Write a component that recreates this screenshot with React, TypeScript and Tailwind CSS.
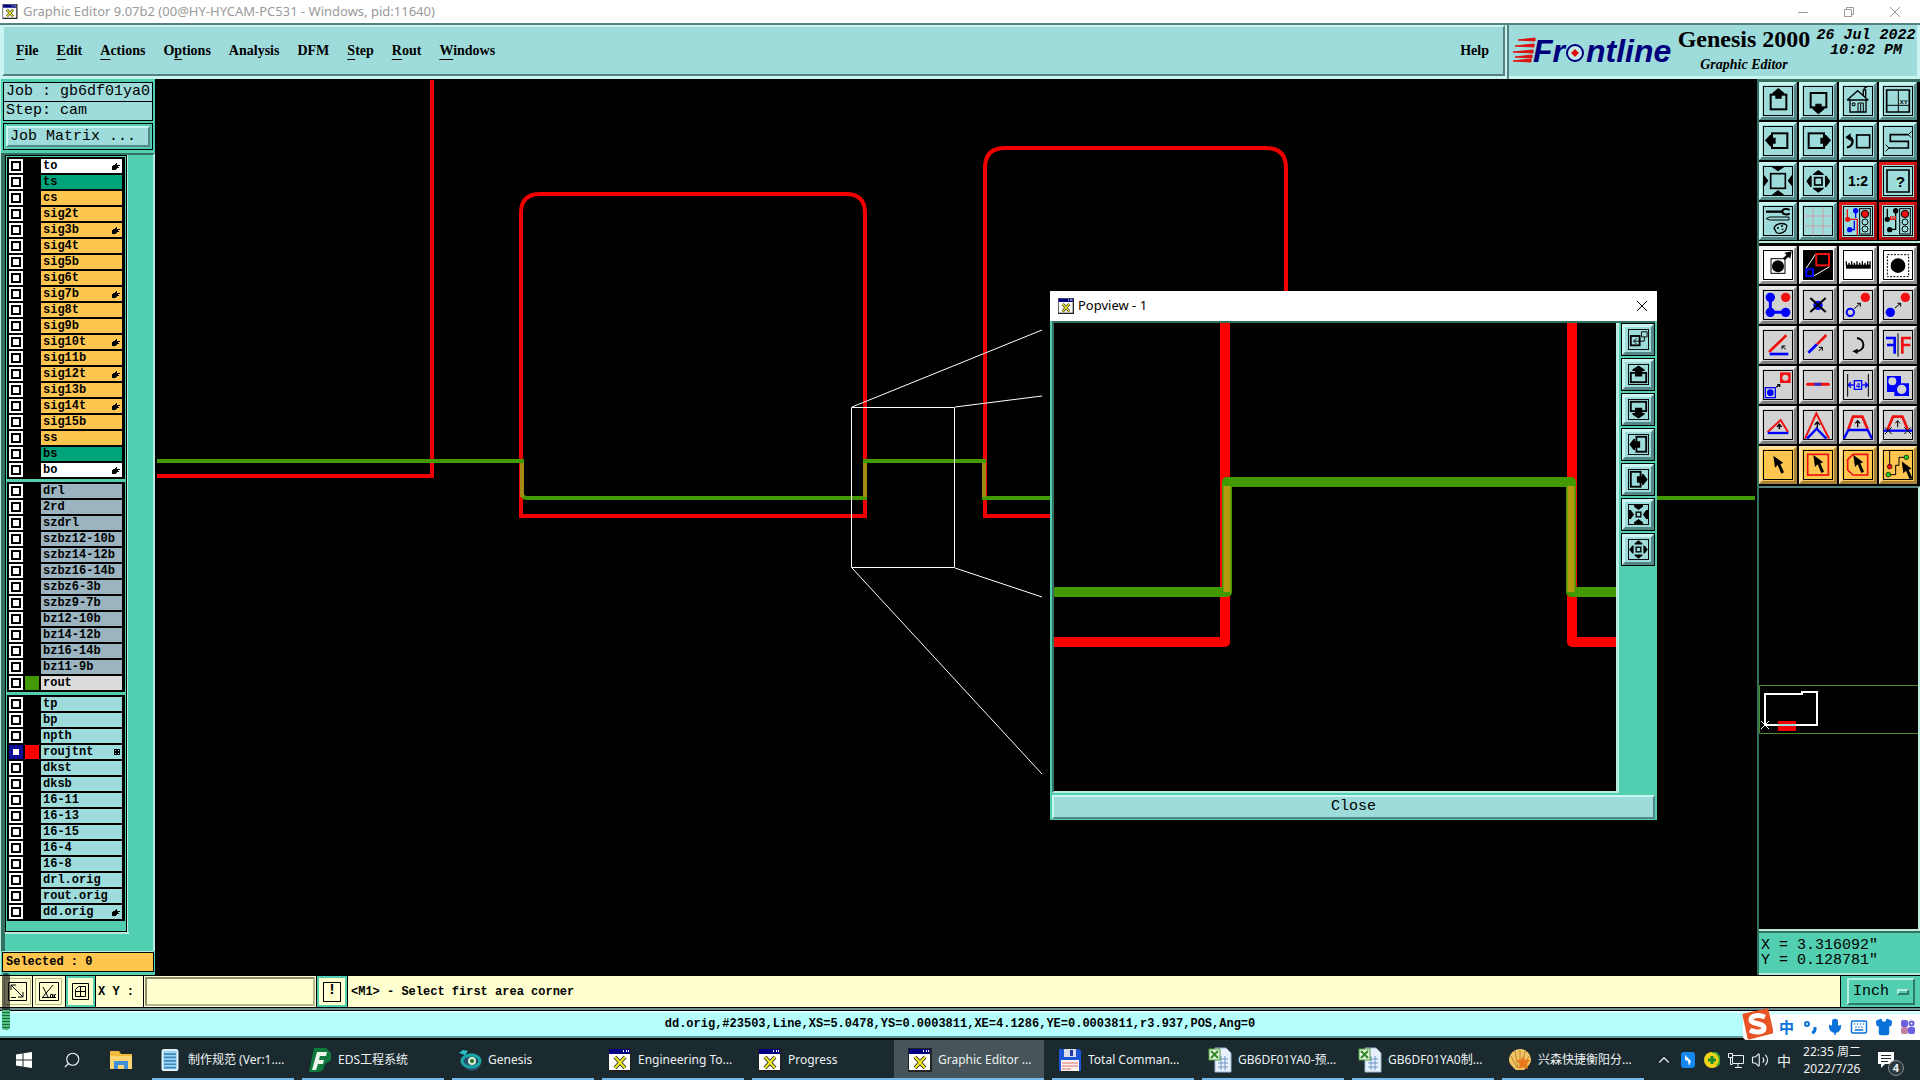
import React from 'react';
import { Search, Mic, Keyboard, Shirt, ChevronUp, Volume2 } from 'lucide-react';

type Layer = { name: string; bg: string; mark?: 'hand' | 'grid'; swatch?: string; active?: boolean };

const BLUE = '#0000ff';
const RED = '#f01010';

const orange = 'bg-[#ffc64f]';
const grey = 'bg-[#9bb4bf]';
const cyan = 'bg-[#9edbdb]';

const boardLayers: Layer[] = [
  { name: 'to', bg: 'bg-white', mark: 'hand' },
  { name: 'ts', bg: 'bg-[#00a37a]' },
  { name: 'cs', bg: orange },
  { name: 'sig2t', bg: orange },
  { name: 'sig3b', bg: orange, mark: 'hand' },
  { name: 'sig4t', bg: orange },
  { name: 'sig5b', bg: orange },
  { name: 'sig6t', bg: orange },
  { name: 'sig7b', bg: orange, mark: 'hand' },
  { name: 'sig8t', bg: orange },
  { name: 'sig9b', bg: orange },
  { name: 'sig10t', bg: orange, mark: 'hand' },
  { name: 'sig11b', bg: orange },
  { name: 'sig12t', bg: orange, mark: 'hand' },
  { name: 'sig13b', bg: orange },
  { name: 'sig14t', bg: orange, mark: 'hand' },
  { name: 'sig15b', bg: orange },
  { name: 'ss', bg: orange },
  { name: 'bs', bg: 'bg-[#00a37a]' },
  { name: 'bo', bg: 'bg-white', mark: 'hand' },
];

const drillLayers: Layer[] = [
  ...['drl', '2rd', 'szdrl', 'szbz12-10b', 'szbz14-12b', 'szbz16-14b', 'szbz6-3b', 'szbz9-7b', 'bz12-10b', 'bz14-12b', 'bz16-14b', 'bz11-9b'].map(
    (name) => ({ name, bg: grey }),
  ),
  { name: 'rout', bg: 'bg-[#dcdcdc]', swatch: 'bg-[#439a00]' },
];

const miscLayers: Layer[] = [
  { name: 'tp', bg: cyan },
  { name: 'bp', bg: cyan },
  { name: 'npth', bg: cyan },
  { name: 'roujtnt', bg: cyan, mark: 'grid', swatch: 'bg-[#ff0000]', active: true },
  ...['dkst', 'dksb', '16-11', '16-13', '16-15', '16-4', '16-8', 'drl.orig', 'rout.orig'].map((name) => ({ name, bg: cyan })),
  { name: 'dd.orig', bg: cyan, mark: 'hand' },
];

const menus: [string, string, string][] = [
  ['', 'F', 'ile'],
  ['', 'E', 'dit'],
  ['', 'A', 'ctions'],
  ['O', 'p', 'tions'],
  ['Analysis', '', ''],
  ['DFM', '', ''],
  ['', 'S', 'tep'],
  ['', 'R', 'out'],
  ['', 'W', 'indows'],
];

const mono = "font-['Liberation_Mono',monospace]";
const serif = "font-['Liberation_Serif',serif]";
const ui = "font-['Noto_Sans','Noto_Sans_CJK_SC',sans-serif]";

const bevel = {
  cyan: 'bg-[#9edbdb] border-t-[#c8f4f2] border-l-[#c8f4f2] border-r-[#548888] border-b-[#548888]',
  white: 'bg-white border-t-[#f4f4f4] border-l-[#f4f4f4] border-r-[#8e8e8e] border-b-[#8e8e8e]',
  grey: 'bg-[#d2d2d2] border-t-[#e9e9e9] border-l-[#e9e9e9] border-r-[#7d7d7d] border-b-[#7d7d7d]',
  orange: 'bg-[#ffc64f] border-t-[#ffe09c] border-l-[#ffe09c] border-r-[#a8843a] border-b-[#a8843a]',
  red: 'bg-[#9edbdb] border-t-[#e01818] border-l-[#e01818] border-r-[#a01010] border-b-[#a01010]',
};

type Tool = { label: string; tone: keyof typeof bevel; art: React.ReactNode };

const trafficLight = (
  <g strokeWidth="3" stroke="#000" fill="none">
    <rect x="50" y="8" width="32" height="76" />
    <circle cx="66" cy="24" r="11" fill={RED} />
    <circle cx="66" cy="48" r="9" />
    <circle cx="66" cy="69" r="9" />
  </g>
);

const cursor = <path d="M0 0l5 36 8-8 11 26 8-4-11-25 9-3z" fill="#000" />;

// Artwork uses a 90 unit box, three units to one screen pixel
const viewTools: Tool[] = [
  {
    label: 'Pan up',
    tone: 'cyan',
    art: (
      <>
        <rect x="23" y="26" width="47" height="44" fill="none" stroke="#000" strokeWidth="6" />
        <path d="M46 6l18 15v5H56v12H37V26h-9v-5z" />
      </>
    ),
  },
  {
    label: 'Pan down',
    tone: 'cyan',
    art: (
      <>
        <rect x="23" y="21" width="47" height="43" fill="none" stroke="#000" strokeWidth="6" />
        <path d="M46 85L29 70v-6h8V53h19v11h8v6z" />
      </>
    ),
  },
  {
    label: 'Home',
    tone: 'cyan',
    art: (
      <g fill="none" stroke="#000" strokeWidth="4">
        <path d="M12 43L44 14l32 29M21 41v37h48V41M14 42h62M61 27V12h7v20M62 8l10-6" />
        <path d="M28 51h8v8h-8zM45 78V51h16v27M53 53v24" strokeWidth="3" />
      </g>
    ),
  },
  {
    label: 'Coordinates view',
    tone: 'cyan',
    art: (
      <>
        <path d="M11 12h68v66H11z" fill="none" stroke="#000" strokeWidth="5" />
        <path d="M46 12v66M11 58h68" stroke="#000" strokeWidth="3" />
        <text x="50" y="55" fontSize="18" fontWeight="bold" fontFamily="Liberation Sans">XY</text>
      </>
    ),
  },
  {
    label: 'Pan left',
    tone: 'cyan',
    art: (
      <>
        <rect x="27" y="22" width="46" height="44" fill="none" stroke="#000" strokeWidth="6" />
        <path d="M6 43l15-16h5v8h12v18H26v8h-5z" />
      </>
    ),
  },
  {
    label: 'Pan right',
    tone: 'cyan',
    art: (
      <>
        <rect x="17" y="22" width="46" height="44" fill="none" stroke="#000" strokeWidth="6" />
        <path d="M84 43L69 27h-5v8H52v18h12v8h5z" />
      </>
    ),
  },
  {
    label: 'Previous view',
    tone: 'cyan',
    art: (
      <g fill="none" stroke="#000">
        <rect x="41" y="27" width="39" height="38" strokeWidth="5" />
        <path d="M12 34c22-4 22 28 0 30" strokeWidth="7" />
        <path d="M7 34l16-12v24z" fill="#000" stroke="none" />
      </g>
    ),
  },
  {
    label: 'Serpentine',
    tone: 'cyan',
    art: (
      <g fill="none" stroke="#000">
        <path d="M76 26H22v20h54v20H18" strokeWidth="5" />
        <path d="M76 26l10-10M76 26l8 8M18 66L8 56M18 66L8 76" strokeWidth="3" />
      </g>
    ),
  },
  {
    label: 'Zoom in',
    tone: 'cyan',
    art: (
      <>
        <rect x="23" y="23" width="44" height="44" fill="none" stroke="#000" strokeWidth="5" />
        <path d="M27 0h36v4L45 16 27 4zM27 90h36v-4L45 72 27 86zM0 28h4l12 16L4 60H0zM90 28h-4L74 44l12 16h4z" />
      </>
    ),
  },
  {
    label: 'Zoom out',
    tone: 'cyan',
    art: (
      <>
        <rect x="35" y="35" width="22" height="22" fill="none" stroke="#000" strokeWidth="5" />
        <path d="M46 12l16 12v3H30v-3zM46 80L62 68v-3H30v3zM10 46l12-17h4v34h-4zM82 46L70 29h-4v34h4z" />
      </>
    ),
  },
  {
    label: 'Scale one to two',
    tone: 'cyan',
    art: <text x="45" y="60" textAnchor="middle" fontSize="42" fontWeight="bold" fontFamily="Liberation Sans">1:2</text>,
  },
  {
    label: 'Query',
    tone: 'red',
    art: (
      <>
        <path d="M12 12h66v66H12z" fill="none" stroke="#000" strokeWidth="5" />
        <text x="52" y="62" textAnchor="middle" fontSize="46" fontWeight="bold" fontFamily="Liberation Sans">?</text>
      </>
    ),
  },
  {
    label: 'Setup',
    tone: 'cyan',
    art: (
      <g fill="none" stroke="#000">
        <path d="M9 17h50" strokeWidth="7" />
        <path d="M80 12c-8-6-22-3-22 5s14 11 22 5" strokeWidth="6" />
        <path d="M10 38l10-5h58v9H20z" strokeWidth="3" />
        <path d="M33 68c2-14 20-18 32-14s4 10 4 16-16 15-26 11c-8-3-2-8-10-13zM42 66h6M54 60h6M56 70h5" strokeWidth="4" />
      </g>
    ),
  },
  {
    label: 'Grid',
    tone: 'cyan',
    art: <path d="M30 2v86M60 2v86M2 30h86M2 60h86" stroke="#c9a0a8" strokeWidth="3" />,
  },
  {
    label: 'Net check on',
    tone: 'red',
    art: (
      <>
        <path d="M13 10v30h30v48" fill="none" stroke={RED} strokeWidth="4" />
        <circle cx="14" cy="40" r="8" fill={RED} />
        <circle cx="38" cy="14" r="8" fill={BLUE} />
        <circle cx="20" cy="71" r="8" fill={BLUE} />
        <path d="M38 14v22M20 71h14V44" fill="none" stroke={BLUE} strokeWidth="4" />
        {trafficLight}
      </>
    ),
  },
  {
    label: 'Net spacing',
    tone: 'red',
    art: (
      <>
        <path d="M13 8v32M38 14v56H20" fill="none" stroke="#000" strokeWidth="4" />
        <circle cx="13" cy="40" r="8" />
        <circle cx="38" cy="14" r="8" />
        <circle cx="20" cy="71" r="8" />
        <path d="M20 40h18M23 30v10M30 30v10M37 30v10" stroke={RED} strokeWidth="4" />
        {trafficLight}
      </>
    ),
  },
];

const editTools: Tool[] = [
  {
    label: 'Select feature',
    tone: 'white',
    art: (
      <>
        <rect x="24" y="26" width="42" height="44" fill="none" stroke="#000" strokeWidth="3" />
        <circle cx="45" cy="49" r="18" />
        <path d="M62 28l16-14" stroke="#000" strokeWidth="8" />
        <path d="M64 8l22-4-4 22z" />
      </>
    ),
  },
  {
    label: 'Popview',
    tone: 'white',
    art: (
      <>
        <rect x="2" y="2" width="86" height="86" />
        <path d="M10 54L38 12M32 78l48-28" stroke="#fff" strokeWidth="3" />
        <rect x="40" y="12" width="38" height="34" fill="none" stroke={RED} strokeWidth="6" />
        <rect x="10" y="58" width="20" height="20" fill="none" stroke={BLUE} strokeWidth="6" />
      </>
    ),
  },
  {
    label: 'Measure',
    tone: 'white',
    art: (
      <>
        <rect x="9" y="44" width="74" height="12" />
        <path d="M10 46V34M18 46V38M26 46V34M34 46V38M42 46V34M50 46V38M58 46V34M66 46V38M74 46V34M81 46V34" stroke="#000" strokeWidth="4" />
      </>
    ),
  },
  {
    label: 'Highlight',
    tone: 'white',
    art: (
      <>
        <rect x="13" y="14" width="64" height="66" fill="none" stroke="#000" strokeWidth="3" strokeDasharray="6 4" />
        <circle cx="45" cy="47" r="22" />
      </>
    ),
  },
  {
    label: 'Copy polyline',
    tone: 'grey',
    art: (
      <>
        <path d="M22 22v45h46" fill="none" stroke={BLUE} strokeWidth="9" />
        <circle cx="22" cy="22" r="14" fill={BLUE} />
        <circle cx="22" cy="67" r="14" fill={BLUE} />
        <circle cx="68" cy="67" r="14" fill={BLUE} />
        <circle cx="68" cy="22" r="14" fill={RED} />
      </>
    ),
  },
  {
    label: 'Delete',
    tone: 'grey',
    art: (
      <>
        <circle cx="45" cy="46" r="14" fill={BLUE} />
        <path d="M22 24l46 42M68 24L22 66" stroke="#000" strokeWidth="6" />
      </>
    ),
  },
  {
    label: 'Move',
    tone: 'grey',
    art: (
      <>
        <circle cx="22" cy="67" r="11" fill="none" stroke={BLUE} strokeWidth="6" />
        <circle cx="67" cy="22" r="14" fill={RED} />
        <path d="M34 56l18-16M42 40h10v10" fill="none" stroke="#000" strokeWidth="3" />
      </>
    ),
  },
  {
    label: 'Copy',
    tone: 'grey',
    art: (
      <>
        <circle cx="22" cy="67" r="14" fill={BLUE} />
        <circle cx="67" cy="22" r="14" fill={RED} />
        <path d="M36 54l17-14M43 40h10v10" fill="none" stroke="#000" strokeWidth="3" />
      </>
    ),
  },
  {
    label: 'Angle line',
    tone: 'grey',
    art: (
      <>
        <path d="M18 66L70 16" stroke={RED} strokeWidth="8" />
        <path d="M20 72h56" stroke={BLUE} strokeWidth="8" />
        <path d="M68 58L57 48M57 58V48h10" fill="none" stroke="#000" strokeWidth="3" />
      </>
    ),
  },
  {
    label: 'Stretch line',
    tone: 'grey',
    art: (
      <>
        <path d="M16 68l26-25" stroke={BLUE} strokeWidth="8" />
        <path d="M42 43l28-28" stroke={RED} strokeWidth="8" />
        <path d="M47 63l11-11M48 52h10v10" fill="none" stroke="#000" strokeWidth="3" />
      </>
    ),
  },
  {
    label: 'Rotate',
    tone: 'grey',
    art: (
      <>
        <path d="M42 24c26 4 26 38-2 40" fill="none" stroke="#000" strokeWidth="6" />
        <path d="M28 64l16-8v16z" />
      </>
    ),
  },
  {
    label: 'Mirror',
    tone: 'grey',
    art: (
      <>
        <path d="M45 10v70" stroke="#000" strokeWidth="3" />
        <path d="M9 24h26v47M35 45H12" fill="none" stroke={BLUE} strokeWidth="8" />
        <path d="M84 24H58v47M58 45h24" fill="none" stroke={RED} strokeWidth="8" />
      </>
    ),
  },
  {
    label: 'Substitute',
    tone: 'grey',
    art: (
      <>
        <rect x="7" y="53" width="30" height="30" fill="none" stroke={BLUE} strokeWidth="4" />
        <circle cx="22" cy="68" r="10" fill={BLUE} />
        <rect x="51" y="7" width="32" height="32" fill={RED} />
        <circle cx="67" cy="23" r="9" fill="#d2d2d2" />
        <path d="M40 52l9-8M43 44h7v7" fill="none" stroke="#000" strokeWidth="4" />
      </>
    ),
  },
  {
    label: 'Break line',
    tone: 'grey',
    art: (
      <>
        <path d="M14 43h62" stroke={RED} strokeWidth="9" strokeLinecap="round" />
        <path d="M34 43h20" stroke="#3030d0" strokeWidth="9" />
      </>
    ),
  },
  {
    label: 'Spacing',
    tone: 'grey',
    art: (
      <>
        <path d="M14 12v68M76 12v68" stroke="#000" strokeWidth="3" />
        <path d="M32 45H16M24 37l-8 8 8 8M58 45h16M66 37l8 8-8 8" fill="none" stroke={BLUE} strokeWidth="4" />
        <rect x="34" y="32" width="22" height="26" fill="none" stroke={BLUE} strokeWidth="4" />
        <text x="45" y="54" textAnchor="middle" fontSize="24" fontWeight="bold" fill={BLUE} fontFamily="Liberation Sans">4</text>
      </>
    ),
  },
  {
    label: 'Union',
    tone: 'grey',
    art: (
      <>
        <path d="M12 18h42v22h24v38H34V66H12z" fill={BLUE} />
        <circle cx="28" cy="34" r="12" fill="#d2d2d2" />
        <circle cx="56" cy="58" r="14" fill="#d2d2d2" />
      </>
    ),
  },
  {
    label: 'Corner',
    tone: 'grey',
    art: (
      <>
        <path d="M14 66l39-36 22 36" fill="none" stroke={RED} strokeWidth="6" />
        <path d="M14 69h62" stroke={BLUE} strokeWidth="7" />
        <path d="M49 58V44M42 51l7-8 7 8" fill="none" stroke="#000" strokeWidth="4" />
      </>
    ),
  },
  {
    label: 'Move corner',
    tone: 'grey',
    art: (
      <>
        <path d="M6 86L40 10l38 76" fill="none" stroke={RED} strokeWidth="6" />
        <path d="M12 86l29-30 29 30" fill="none" stroke={BLUE} strokeWidth="7" />
        <path d="M43 54V36M35 44l8-8 8 8" fill="none" stroke="#000" strokeWidth="4" />
      </>
    ),
  },
  {
    label: 'Offset segment',
    tone: 'grey',
    art: (
      <>
        <path d="M16 58l14-38h28l16 38" fill="none" stroke={RED} strokeWidth="8" />
        <path d="M3 86l13-26h58l13 26" fill="none" stroke={BLUE} strokeWidth="7" />
        <path d="M44 52V32M37 40l7-8 7 8" fill="none" stroke="#000" strokeWidth="4" />
      </>
    ),
  },
  {
    label: 'Trim segment',
    tone: 'grey',
    art: (
      <>
        <path d="M14 58l16-38h28l16 38" fill="none" stroke={RED} strokeWidth="8" />
        <path d="M2 62h86" stroke={BLUE} strokeWidth="7" />
        <path d="M44 52V32M37 40l7-8 7 8M6 52l20 20M26 52L6 72M64 52l20 20M84 52L64 72" fill="none" stroke="#000" strokeWidth="3" />
      </>
    ),
  },
  { label: 'Pointer', tone: 'orange', art: <g transform="translate(31 17)">{cursor}</g> },
  {
    label: 'Frame select',
    tone: 'orange',
    art: (
      <>
        <rect x="14" y="13" width="62" height="62" fill="none" stroke={RED} strokeWidth="5" />
        <g transform="translate(31 15)">{cursor}</g>
      </>
    ),
  },
  {
    label: 'Polygon select',
    tone: 'orange',
    art: (
      <>
        <path d="M30 13h44v62H30L14 60V29z" fill="none" stroke={RED} strokeWidth="5" />
        <g transform="translate(31 15)">{cursor}</g>
      </>
    ),
  },
  {
    label: 'Net select',
    tone: 'orange',
    art: (
      <>
        <path d="M20 2v46M16 74h22V46h10V22h22" fill="none" stroke="#000" strokeWidth="3" />
        <circle cx="20" cy="50" r="7" fill={RED} stroke="#000" strokeWidth="2" />
        <circle cx="16" cy="74" r="7" fill="#20d020" stroke="#000" strokeWidth="2" />
        <circle cx="70" cy="22" r="7" fill="#20d020" stroke="#000" strokeWidth="2" />
        <g transform="translate(56 34)">{cursor}</g>
      </>
    ),
  },
];

const popTools: { label: string; art: React.ReactNode }[] = [
  {
    label: 'Popview area',
    art: (
      <g fill="none" stroke="#000">
        <rect x="12" y="30" width="38" height="40" strokeWidth="8" />
        <path d="M58 12h24v22H58zM70 34v18H24M36 40L24 52l12 12" strokeWidth="4" />
      </g>
    ),
  },
  {
    label: 'Pan up',
    art: (
      <>
        <rect x="12" y="38" width="66" height="40" fill="none" stroke="#000" strokeWidth="8" />
        <path d="M45 6l26 18v6H61v24H30V30H19v-6z" />
      </>
    ),
  },
  {
    label: 'Pan down',
    art: (
      <>
        <rect x="12" y="12" width="66" height="40" fill="none" stroke="#000" strokeWidth="8" />
        <path d="M45 84L19 66v-6h11V38h31v22h10v6z" />
      </>
    ),
  },
  {
    label: 'Pan left',
    art: (
      <>
        <rect x="36" y="12" width="42" height="64" fill="none" stroke="#000" strokeWidth="8" />
        <path d="M6 45l18-24h6v10h22v28H30v10h-6z" />
      </>
    ),
  },
  {
    label: 'Pan right',
    art: (
      <>
        <rect x="12" y="12" width="42" height="64" fill="none" stroke="#000" strokeWidth="8" />
        <path d="M84 45L66 21h-6v10H38v28h22v10h6z" />
      </>
    ),
  },
  {
    label: 'Zoom in',
    art: (
      <>
        <rect x="35" y="35" width="20" height="20" fill="none" stroke="#000" strokeWidth="6" />
        <path d="M26 4h38v8L45 26 26 12zM26 86h38v-8L45 64 26 78zM4 26h8l14 19-14 19H4zM86 26h-8L64 45l14 19h8z" />
      </>
    ),
  },
  {
    label: 'Zoom out',
    art: (
      <>
        <rect x="35" y="35" width="20" height="20" fill="none" stroke="#000" strokeWidth="6" />
        <path d="M45 5l17 14v5H28v-5zM45 85l17-14v-5H28v5zM5 45l14-17h5v34h-5zM85 45L71 28h-5v34h5z" />
      </>
    ),
  },
];

const Art: React.FC<{ children: React.ReactNode; className: string; frame?: string }> = ({ children, className, frame = '3' }) => (
  <svg viewBox="0 0 90 90" className={className} aria-hidden="true">
    <rect x="1.5" y="1.5" width="87" height="87" fill="none" stroke="#000" strokeWidth={frame} />
    {children}
  </svg>
);

const ToolGrid: React.FC<{ tools: Tool[] }> = ({ tools }) => (
  <div className="grid grid-cols-[repeat(4,38px)] gap-0.5 bg-black">
    {tools.map((t) => (
      <button key={t.label} aria-label={t.label} className={`h-[38px] border-3 p-px ${bevel[t.tone]}`}>
        <Art className="block size-[30px]">{t.art}</Art>
      </button>
    ))}
  </div>
);

const LayerGroup: React.FC<{ layers: Layer[] }> = ({ layers }) => (
  <ul className="bg-black pt-0.5 pl-0.5 pr-[3px]">
    {layers.map((l) => (
      <li key={l.name} className="flex h-4 gap-0.5">
        <input
          type="checkbox"
          id={`layer-${l.name}`}
          defaultChecked={l.active}
          className="size-3.5 shrink-0 appearance-none border-2 border-white bg-white shadow-[inset_0_0_0_2px_#000] checked:border-[#10109a] checked:shadow-[inset_0_0_0_2px_#10109a]"
        />
        <span className={`size-3.5 shrink-0 ${l.swatch ?? 'bg-black'}`} />
        <label
          htmlFor={`layer-${l.name}`}
          className={`flex h-3.5 min-w-0 flex-1 items-center justify-between pl-0.5 pr-0.5 ${mono} text-[12px] leading-[14px] font-bold ${l.bg}`}
        >
          {l.name}
          {l.mark === 'hand' && (
            <svg viewBox="0 0 8 8" className="size-2 shrink-0" aria-hidden="true">
              <path d="M0 4h1V3h2V2h1V1h1v2h3v1H6v1h1v1H5v1H4v1H0z" />
            </svg>
          )}
          {l.mark === 'grid' && (
            <svg viewBox="0 0 6 6" className="size-1.5 shrink-0" aria-hidden="true">
              <path d="M0 0h6v6H0zM1 1v1h1V1zM4 1v1h1V1zM1 4v1h1V4zM4 4v1h1V4z" fillRule="evenodd" />
            </svg>
          )}
        </label>
      </li>
    ))}
  </ul>
);

const XWindowIcon: React.FC<{ className: string }> = ({ className }) => (
  <svg viewBox="0 0 24 24" className={className} aria-hidden="true">
    <rect width="24" height="24" fill="#222" />
    <rect x="1" y="1" width="21" height="21" fill="#fff" />
    <rect x="1" y="1" width="21" height="5" fill="#000080" />
    <path d="M15 3h1M18 3h1M20 3h1" stroke="#fff" strokeWidth="2" />
    <path d="M7 9l10 11M17 9L7 20" stroke="#333" strokeWidth="4" />
    <path d="M7 9l10 11M17 9L7 20" stroke="#f4ec20" strokeWidth="2" />
  </svg>
);

const NoteIcon = () => (
  <svg viewBox="0 0 20 26" className="h-[22px] w-5">
    <rect x="1" y="1" width="18" height="24" rx="2" fill="#9fd3f2" stroke="#e6f4fc" strokeWidth="2" />
    <path d="M3 6h14M3 10h14M3 14h14M3 18h14M3 22h14" stroke="#3d88bd" strokeWidth="2" />
  </svg>
);

const EdsIcon = () => (
  <svg viewBox="0 0 22 24" className="h-6 w-[22px]">
    <path d="M5 0h12l5 5v7l-6 4-2 6-4 2H0z" fill="#0f7a3c" />
    <path d="M8 4h10l-1 4h-6l-1 4h5l-1 4H9l-2 6H3z" fill="#e9f5ea" />
  </svg>
);

const GenesisIcon = () => (
  <svg viewBox="0 0 24 24" className="size-6">
    <circle cx="14" cy="14" r="9" fill="#27506e" />
    <ellipse cx="13" cy="13" rx="9" ry="6" fill="none" stroke="#1aa6a6" strokeWidth="3" />
    <circle cx="14" cy="13" r="4" fill="#d6efd0" />
    <circle cx="14" cy="13" r="2" fill="#2a6b35" />
    <path d="M1 5l4-3 5 1-3 4z" fill="#2cc0cc" />
  </svg>
);

const FloppyIcon = () => (
  <svg viewBox="0 0 24 24" className="size-6">
    <path d="M1 1h20l2 2v20H1z" fill="#1d55d8" />
    <rect x="6" y="1" width="12" height="8" fill="#d7dce8" />
    <rect x="12" y="2" width="3" height="6" fill="#1d3fa0" />
    <rect x="3" y="12" width="18" height="11" fill="#fff3f0" />
    <path d="M4 15h16M4 18h16M4 21h9" stroke="#e07070" />
  </svg>
);

const SheetIcon = () => (
  <svg viewBox="0 0 24 26" className="h-[26px] w-6">
    <path d="M7 1h11l5 5v19H7z" fill="#e8f1fb" stroke="#9cb6d4" />
    <path d="M10 12h10M10 16h10M10 20h10M13 9v14M17 9v14" stroke="#6f95c4" />
    <rect x="1" y="2" width="11" height="11" fill="#e5f3e0" stroke="#4b9b3d" />
    <path d="M3 4l7 7M10 4l-7 7" stroke="#2f8a26" strokeWidth="2" />
  </svg>
);

const ShellIcon = () => (
  <svg viewBox="0 0 24 24" className="size-6">
    <path d="M12 1c6 0 11 5 11 11 0 4-5 8-7 10H8C6 20 1 16 1 12 1 6 6 1 12 1z" fill="#f3c566" />
    <path d="M12 2v18M7 3l3 17M17 3l-3 17M3 8l6 12M21 8l-6 12" stroke="#b9812c" />
    <path d="M15 8l2 4 5 0-3 4 1 5-5-2-4 2 1-5-4-4 5 0z" fill="#e87a1c" />
  </svg>
);

const tasks: { label: string; icon: React.ReactNode; active?: boolean }[] = [
  { label: '制作规范 (Ver:1....', icon: <NoteIcon /> },
  { label: 'EDS工程系统', icon: <EdsIcon /> },
  { label: 'Genesis', icon: <GenesisIcon /> },
  { label: 'Engineering To...', icon: <XWindowIcon className="size-6" /> },
  { label: 'Progress', icon: <XWindowIcon className="size-6" /> },
  { label: 'Graphic Editor ...', icon: <XWindowIcon className="size-6" />, active: true },
  { label: 'Total Comman...', icon: <FloppyIcon /> },
  { label: 'GB6DF01YA0-预...', icon: <SheetIcon /> },
  { label: 'GB6DF01YA0制...', icon: <SheetIcon /> },
  { label: '兴森快捷衡阳分...', icon: <ShellIcon /> },
];

const TitleBar = () => (
  <header className={`flex h-[23px] shrink-0 items-center bg-white pl-0.5 text-[#9a9a9a] ${ui}`}>
    <XWindowIcon className="h-[15px] w-4" />
    <h1 className="ml-[5px] flex-1 text-[13px]">Graphic Editor 9.07b2 (00@HY-HYCAM-PC531 - Windows, pid:11640)</h1>
    <div className="flex pr-0.5">
      <button aria-label="Minimize" className="flex w-[46px] justify-center">
        <svg viewBox="0 0 10 10" className="size-2.5" stroke="currentColor"><path d="M0 5.5h10" /></svg>
      </button>
      <button aria-label="Restore" className="flex w-[46px] justify-center">
        <svg viewBox="0 0 10 10" className="size-2.5" stroke="currentColor" fill="none"><path d="M.5 2.5h7v7h-7zM2.5 2.5v-2h7v7h-2" /></svg>
      </button>
      <button aria-label="Close window" className="flex w-[46px] justify-center">
        <svg viewBox="0 0 10 10" className="size-2.5" stroke="currentColor"><path d="M0 0l10 10M10 0L0 10" /></svg>
      </button>
    </div>
  </header>
);

const FrontlineLogo = () => (
  <svg viewBox="0 0 164 44" className="h-11 w-[164px] overflow-visible" role="img" aria-label="Frontline">
    <path d="M5 11l17-2v3zM2 17l19-2v3zM0 23l20-2v3zM2 28l17-2v3zM0 32l18-2v3z" fill="#e01010" stroke="#e01010" />
    <g fill="#00007c" fontFamily="Liberation Sans" fontSize="32" fontWeight="bold" fontStyle="italic">
      <text x="20" y="33">Fr</text>
      <text x="73" y="33">ntline</text>
    </g>
    <circle cx="62" cy="24" r="8" fill="#c4ecec" stroke="#00007c" strokeWidth="2" />
    <path d="M62 20l4 4-4 4-4-4z" fill="#e01010" />
  </svg>
);

const MenuBar = () => (
  <div className="flex h-14 shrink-0 border-t-2 border-[#548080] bg-[#c8f4f2]">
    <nav className={`mb-[3px] ml-0.5 flex flex-1 items-center gap-[18px] border-2 border-t-[#c8f4f2] border-r-[#548080] border-b-[#548080] border-l-[#c8f4f2] bg-[#9edbdb] pr-3.5 pl-3 ${serif} text-[14px] font-bold`}>
      {menus.map(([pre, key, post]) => (
        <button key={pre + key + post}>
          {pre}
          <span className="underline underline-offset-4">{key}</span>
          {post}
        </button>
      ))}
      <button className="ml-auto">Help</button>
    </nav>
    <div className="ml-0.5 flex w-[413px] border-l-2 border-[#548080]">
      <div className="mr-[3px] mb-[3px] flex flex-1 bg-[#9edbdb] pl-1">
        <div className="flex w-[164px] shrink-0 items-center">
          <FrontlineLogo />
        </div>
        <div className={`flex flex-1 flex-col items-center pr-1 ${serif} font-bold`}>
          <div className="text-[24px] leading-[28px] whitespace-nowrap">Genesis 2000</div>
          <div className="pt-1 text-[14px] leading-4 italic">Graphic Editor</div>
        </div>
        <time className={`w-[102px] pt-[3px] text-center ${mono} text-[15px] leading-[15px] font-bold italic whitespace-nowrap`}>
          26 Jul 2022
          <br />
          10:02 PM
        </time>
      </div>
    </div>
  </div>
);

const LeftPanel = () => (
  <aside className="flex w-[154px] shrink-0 flex-col bg-[#52cfb0]">
    <div className={`mx-0.5 mt-[3px] border border-black bg-[#9edbdb] ${mono} text-[15px] leading-[18px] whitespace-nowrap`}>
      <div className="border-b border-black pl-0.5">Job : gb6df01ya0</div>
      <div className="pl-0.5">Step: cam</div>
    </div>
    <div className="mx-0.5 mt-0.5 border border-black p-0.5">
      <button className={`block w-full border-2 pl-0.5 text-left ${bevel.cyan} ${mono} text-[15px] leading-[17px]`}>Job Matrix ...</button>
    </div>
    <div className="mt-[3px] flex flex-1 flex-col border-t-2 border-r-2 border-l-4 border-t-[#33705f] border-r-[#b8ecdf] border-l-[#33705f]">
      <div className="flex">
        <div className="flex w-[122px] flex-col gap-[3px] border border-black px-px pt-px pb-2.5">
          <LayerGroup layers={boardLayers} />
          <LayerGroup layers={drillLayers} />
          <LayerGroup layers={miscLayers} />
        </div>
        <div className="w-px bg-[#b8ecdf]" />
      </div>
      <div className="h-0.5 w-[124px] bg-[#b8ecdf]" />
    </div>
    <div className="mx-0.5 h-px bg-[#b8ecdf]" />
    <div className={`mx-px mb-[3px] border border-black pl-[3px] ${orange} ${mono} text-[12px] leading-[18px] font-bold`}>Selected : 0</div>
  </aside>
);

const PopView = () => (
  <section className="absolute top-[212px] left-[895px] flex h-[529px] w-[607px] flex-col bg-[#52cfb0]" aria-label="Popview">
    <div className={`flex h-[30px] shrink-0 items-center bg-white pl-2 text-[13px] ${ui}`}>
      <XWindowIcon className="size-4" />
      <h2 className="ml-1 flex-1">Popview - 1</h2>
      <button aria-label="Close popview" className="px-2.5">
        <svg viewBox="0 0 10 10" className="size-2.5" stroke="#000"><path d="M0 0l10 10M10 0L0 10" /></svg>
      </button>
    </div>
    <div className="mx-0.5 flex min-h-0 flex-1 gap-0.5 border-t-2 border-[#33705f]">
      <div className="flex-1 border-r-3 border-b-2 border-l-2 border-r-[#b8ecdf] border-b-[#b8ecdf] border-l-[#33705f] bg-black">
        <svg className="block h-full w-full" fill="none">
          <g stroke="#ff0000" strokeWidth="10" strokeLinejoin="round">
            <path d="M0 319h171V0" />
            <path d="M518 0v319h60" />
          </g>
          <path d="M0 269h173V159h344v110h60" stroke="#439a00" strokeWidth="10" strokeLinejoin="round" />
          <path d="M173 269V163M517 163v106" stroke="#b59a10" strokeWidth="7" />
        </svg>
      </div>
      <div className="flex w-[34px] flex-col gap-0.5">
        {popTools.map((t) => (
          <div key={t.label} className="border border-black">
            <button aria-label={t.label} className={`flex h-[31px] w-full items-center justify-center border-3 ${bevel.cyan}`}>
              <Art className="block size-[21px]" frame="5">{t.art}</Art>
            </button>
          </div>
        ))}
      </div>
    </div>
    <button className={`mx-0.5 mt-0.5 mb-px h-6 shrink-0 border-2 ${bevel.cyan} ${mono} text-[15px] leading-5`}>Close</button>
  </section>
);

const Canvas = () => (
  <main className="relative min-w-0 flex-1 overflow-hidden bg-black px-0.5">
    <svg className="block h-full w-full" fill="none" aria-hidden="true">
      <g transform="translate(-2 1)">
        <g stroke="#f00000" strokeWidth="4">
          <path d="M0 396h277V0" />
          <path d="M366 133v303h344V133q0-19-19-19H385q-19 0-19 19z" />
          <path d="M830 88v348h301V88q0-20-20-20H850q-20 0-20 20z" />
        </g>
        <path d="M0 381h367v32q0 5 5 5h338v-37h119v37h800" stroke="#439a00" strokeWidth="4" />
        <path d="M367 383v34M710 383v34M829 383v34" stroke="#a08a10" strokeWidth="4" />
        <path d="M696.5 327.500h103v160h-103zM697 327l190-77M800 327l87-11M800 488l87 29M697 488l190 206" stroke="#fff" />
      </g>
    </svg>
    <PopView />
  </main>
);

const RightPanel = () => (
  <aside className="flex w-[163px] shrink-0 flex-col border-l-2 border-[#33705f] bg-black">
    <div className="border-t-3 border-[#33705f] pb-px">
      <ToolGrid tools={viewTools} />
    </div>
    <div className="mb-[3px] h-0.5 bg-[#b8ecdf]" />
    <ToolGrid tools={editTools} />
    <div className="mt-0.5 flex-1 border-t-2 border-r-2 border-b-2 border-t-[#548080] border-r-[#b8ecdf] border-b-[#b8ecdf]">
      <svg className="block h-full w-full" fill="none" aria-hidden="true">
        <path d="M.5 197.500h163v48H.5z" stroke="#4d8a2a" />
        <path d="M6 206h37v-2h15v33H6z" stroke="#fff" strokeWidth="2" />
        <rect x="19" y="233" width="18" height="10" fill="#f00000" />
        <path d="M19 237h18" stroke="#9edbdb" strokeWidth="2" />
        <path d="M2 233l8 8M10 233l-8 8" stroke="#fff" />
      </svg>
    </div>
    <div className={`h-11 border-t-2 border-b-2 border-t-[#33705f] border-b-[#b8ecdf] bg-[#52cfb0] pt-[5px] pl-0.5 ${mono} text-[15px] leading-[15px] whitespace-pre`}>
      <div>X = 3.316092"</div>
      <div>Y = 0.128781"</div>
    </div>
  </aside>
);

const PromptBar = () => (
  <div className={`flex h-[33px] shrink-0 items-stretch gap-px border-t border-black bg-black pb-px ${mono} text-[12px] font-bold`}>
    <button aria-label="Snap to point" className="flex w-8 items-center justify-end bg-[#ffffcf]">
      <svg viewBox="0 0 28 28" className="size-7" fill="none" stroke="#000">
        <path d="M.5.5h26v26H.5z" stroke="#b8b890" />
        <path d="M4.500 4.500h18v18h-18zM7 7l12 12M7 12V7h5M19 14v5h-5M7 19.500h5" />
      </svg>
    </button>
    <button aria-label="Angle snap" className="flex w-8 items-center justify-center bg-[#ffffcf]">
      <svg viewBox="0 0 28 28" className="size-7" fill="none" stroke="#000">
        <path d="M.5.5h26v26H.5z" stroke="#b8b890" />
        <path d="M4.500 4.500h19v18h-19zM7 19.500h14M7 20L18 7M8 9l5 10M15.500 16.500h2v3h-2zM19 16v4M21 16l-2 2 2 2" />
      </svg>
    </button>
    <button aria-label="Grid snap" className="flex w-[29px] items-center justify-center border-2 border-[#52cfb0] bg-[#ffffcf]">
      <svg viewBox="0 0 21 21" className="size-[21px]" fill="none" stroke="#000">
        <path d="M2.500 2.500h16v16h-16zM5.500 8.500l3-3h7v10h-10zM10.500 5v11M5 10.500h11" />
      </svg>
    </button>
    <label htmlFor="xy" className="flex w-[47px] items-center bg-[#ffffcf] pl-0.5 whitespace-nowrap">X Y :</label>
    <div className="flex bg-[#ffffcf] p-px">
      <input id="xy" className="w-[170px] border-2 border-t-[#8d8d70] border-r-[#b8b890] border-b-[#b8b890] border-l-[#8d8d70] px-1" />
    </div>
    <button aria-label="Interrupt" className="flex w-[30px] items-center justify-center border-2 border-[#52cfb0] bg-[#ffffcf]">
      <span className="flex h-5 w-[18px] items-center justify-center border border-black text-[15px]">!</span>
    </button>
    <p className="flex flex-1 items-center bg-[#ffffcf] pl-[3px]">&lt;M1&gt; - Select first area corner</p>
    <div className="flex w-[79px] border-r border-[#52cfb0] bg-[#52cfb0] py-0.5 pr-1 pl-1.5">
      <button className={`flex flex-1 items-center justify-between border-2 border-t-[#b8ecdf] border-r-[#2f7a66] border-b-[#2f7a66] border-l-[#b8ecdf] pr-1 pl-1 ${mono} text-[15px] leading-5 font-normal`}>
        Inch
        <span className="h-1.5 w-3 border-2 border-t-[#b8ecdf] border-r-[#2f7a66] border-b-[#2f7a66] border-l-[#b8ecdf]" />
      </button>
    </div>
  </div>
);

const StatusBar = () => (
  <div className="relative shrink-0">
    <div className="h-8 border-t-2 border-[#6f9090] bg-black pt-px">
      <p className={`h-[27px] border-t-2 border-b-2 border-t-[#dcffff] border-b-[#5f9a9a] bg-[#b4fefe] text-center ${mono} text-[12px] leading-[22px] font-bold`}>
        dd.orig,#23503,Line,XS=5.0478,YS=0.0003811,XE=4.1286,YE=0.0003811,r3.937,POS,Ang=0
      </p>
    </div>
    {/* level strip floating over the lower left corner */}
    <div className="absolute bottom-2.5 left-0.5 flex h-[57px] w-2 flex-col justify-end rounded bg-black/60">
      <div className="h-5 rounded-b bg-[repeating-linear-gradient(#4fc080_0_2px,#1d6b40_2px_3px)]" />
    </div>
    <div className="absolute right-0 bottom-0 flex h-[26px] items-center rounded-l bg-white pl-[31px] text-[#0a72d8]">
      <svg viewBox="0 0 32 32" className="absolute -top-1.5 -left-0.5 size-8" aria-hidden="true">
        <path d="M3 7l23-5 5 22-23 6z" fill="#e85424" stroke="#e85424" strokeWidth="3" strokeLinejoin="round" />
        <path d="M24 9c-8-3-14-1-14 3s13 3 13 8-9 5-14 2" fill="none" stroke="#fff" strokeWidth="5" />
      </svg>
      <span className={`w-[25px] text-center ${ui} text-[15px] leading-5 font-bold`}>中</span>
      <span className="flex w-6 justify-center">
        <svg viewBox="0 0 14 14" className="size-3.5" fill="none" stroke="currentColor" strokeWidth="2">
          <circle cx="3" cy="4" r="2" />
          <path d="M11 7v2q0 3-3 4" strokeWidth="3" />
        </svg>
      </span>
      <span className="flex w-6 justify-center"><Mic className="size-[18px]" fill="currentColor" /></span>
      <span className="flex w-6 justify-center"><Keyboard className="size-[18px]" /></span>
      <span className="flex w-[25px] justify-center"><Shirt className="size-[18px]" fill="currentColor" /></span>
      <span className="flex w-6 justify-center">
        <svg viewBox="0 0 14 14" className="size-3.5" fill="none" stroke="#6a5fe0" strokeWidth="2">
          <circle cx="10.500" cy="3.500" r="2" />
          <rect x="1" y="1" width="5" height="5" rx="1" fill="#6a5fe0" />
          <rect x="1" y="8" width="5" height="5" rx="1" fill="#c080a0" stroke="#c080a0" />
          <rect x="8" y="8" width="5" height="5" rx="1" fill="#6a5fe0" />
        </svg>
      </span>
    </div>
  </div>
);

const Taskbar = () => (
  <footer className={`flex h-10 shrink-0 items-stretch bg-[#1b2a2f] text-[12px] text-[#eef2f3] ${ui}`}>
    <button aria-label="Start" className="flex w-12 items-center justify-center">
      <svg viewBox="0 0 16 16" className="size-4" fill="#fff">
        <path d="M0 2.500l6.500-1v6H0zM7.500 1.300L16 0v7.500H7.500zM0 8.500h6.500v6L0 13.500zM7.500 8.500H16V16l-8.500-1.300z" />
      </svg>
    </button>
    <button aria-label="Search" className="flex w-12 items-center justify-center">
      <Search className="size-[18px] -scale-x-100" strokeWidth={1.5} />
    </button>
    <button aria-label="File Explorer" className="flex w-12 items-center justify-center pl-0.5">
      <svg viewBox="0 0 24 20" className="h-5 w-6">
        <path d="M1 1h9l2 3h11v15H1z" fill="#f0b83c" />
        <path d="M1 6h22v13H1z" fill="#fbd673" />
        <path d="M5 19v-8h14v8h-4v-4H9v4z" fill="#3f8fdb" />
      </svg>
    </button>
    {tasks.map((t) => (
      <button
        key={t.label}
        className={`relative flex w-[150px] items-center gap-1.5 pl-3.5 text-left ${t.active ? 'bg-[#475459]' : ''}`}
      >
        <span className="flex w-6 shrink-0 justify-center">{t.icon}</span>
        <span className="min-w-0 overflow-hidden whitespace-nowrap">{t.label}</span>
        <span className={`absolute bottom-0 h-0.5 bg-[#76b9ed] ${t.active ? 'inset-x-0' : 'right-0 left-2'}`} />
      </button>
    ))}
    <div className="ml-auto flex items-center pr-4">
      <span className="flex w-6 justify-center"><ChevronUp className="size-[18px]" strokeWidth={1.5} /></span>
      <span className="flex w-6 justify-center">
        <svg viewBox="0 0 14 16" className="h-4 w-3.5">
          <rect width="14" height="16" rx="3" fill="#1488f0" />
          <path d="M4 3l6 6-2 5-1-5-3-1z" fill="#fff" />
        </svg>
      </span>
      <span className="flex w-6 justify-center">
        <svg viewBox="0 0 16 16" className="size-4">
          <circle cx="8" cy="8" r="8" fill="#f2d31c" />
          <path d="M8 0a8 8 0 0 1 5 14" fill="none" stroke="#3aa632" strokeWidth="2" />
          <path d="M8 4v8M4 8h8" stroke="#1c8a2a" strokeWidth="3" />
        </svg>
      </span>
      <span className="flex w-6 justify-center">
        <svg viewBox="0 0 16 16" className="size-4" fill="none" stroke="currentColor">
          <path d="M4.500 3.500h11v8h-11zM10 12v3M7 15.500h7M.5 1.500h4v4h-4zM2.500 6v6.500h2" />
        </svg>
      </span>
      <span className="flex w-6 justify-center"><Volume2 className="size-[18px]" strokeWidth={1.5} /></span>
      <span className="flex w-6 justify-center text-[14px]">中</span>
      <time className="w-[72px] text-center leading-[17px] whitespace-nowrap">
        22:35 周二
        <br />
        2022/7/26
      </time>
      <button aria-label="Notifications" className="relative flex h-9 w-9 items-center justify-center">
        <svg viewBox="0 0 18 18" className="size-[18px]">
          <path d="M1 1h16v12H8l-4 4v-4H1z" fill="#fff" />
          <path d="M4 4.500h10M4 7.500h10M4 10.500h7" stroke="#1b2a2f" />
        </svg>
        <span className="absolute right-0 bottom-0.5 flex size-4 items-center justify-center rounded-full border border-[#8a9498] bg-[#2c383c] text-[11px] font-bold">4</span>
      </button>
    </div>
  </footer>
);

export default function App() {
  return (
    <div className="flex h-screen w-full flex-col overflow-hidden bg-[#c8f4f2] text-black">
      <TitleBar />
      <MenuBar />
      <div className="flex min-h-0 flex-1 border-l border-[#b8ecdf] bg-black">
        <LeftPanel />
        <Canvas />
        <RightPanel />
      </div>
      <PromptBar />
      <StatusBar />
      <Taskbar />
    </div>
  );
}
